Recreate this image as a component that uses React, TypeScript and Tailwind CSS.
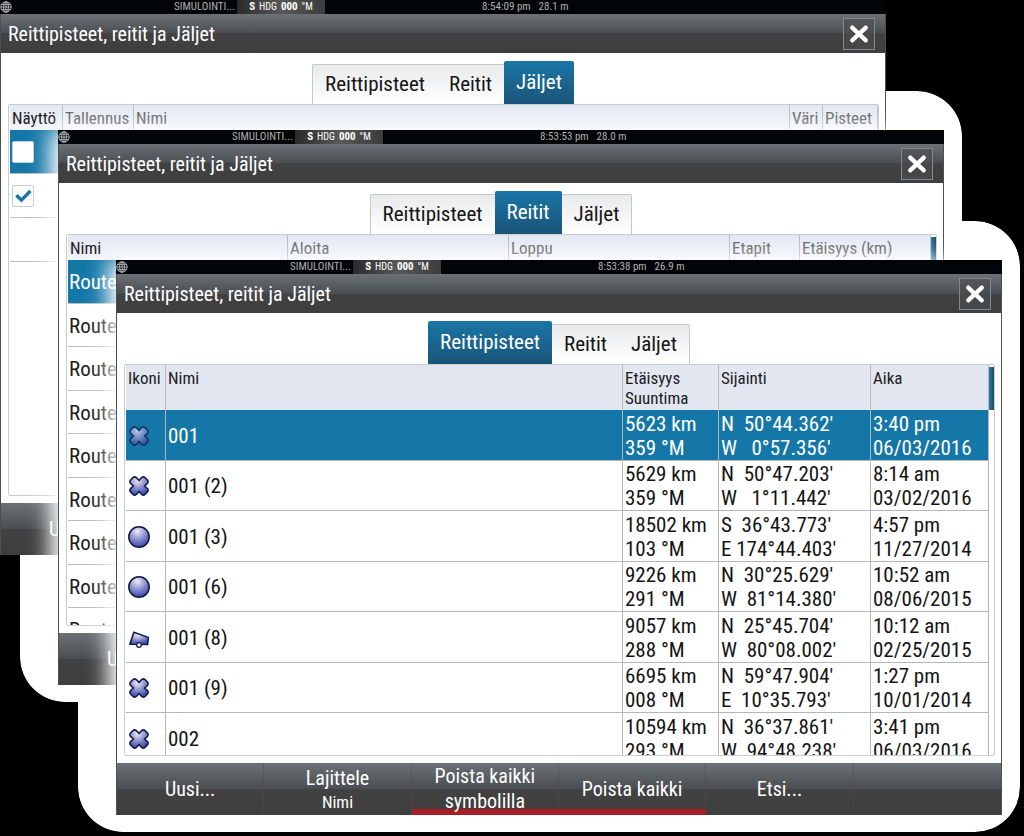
import type { ReactNode } from 'react';

type TabName = 'Reittipisteet' | 'Reitit' | 'Jäljet';
type Symbol = 'cross' | 'circle' | 'trailer';

type Waypoint = {
  symbol: Symbol;
  name: string;
  range: string;
  bearing: string;
  lat: string;
  lon: string;
  time: string;
  date: string;
};

type Action = { lines: string[]; value?: string; danger?: boolean };

const tabNames: TabName[] = ['Reittipisteet', 'Reitit', 'Jäljet'];

const waypoints: Waypoint[] = [
  { symbol: 'cross', name: '001', range: '5623 km', bearing: '359 °M', lat: "N  50°44.362'", lon: "W   0°57.356'", time: '3:40 pm', date: '06/03/2016' },
  { symbol: 'cross', name: '001 (2)', range: '5629 km', bearing: '359 °M', lat: "N  50°47.203'", lon: "W   1°11.442'", time: '8:14 am', date: '03/02/2016' },
  { symbol: 'circle', name: '001 (3)', range: '18502 km', bearing: '103 °M', lat: "S  36°43.773'", lon: "E 174°44.403'", time: '4:57 pm', date: '11/27/2014' },
  { symbol: 'circle', name: '001 (6)', range: '9226 km', bearing: '291 °M', lat: "N  30°25.629'", lon: "W  81°14.380'", time: '10:52 am', date: '08/06/2015' },
  { symbol: 'trailer', name: '001 (8)', range: '9057 km', bearing: '288 °M', lat: "N  25°45.704'", lon: "W  80°08.002'", time: '10:12 am', date: '02/25/2015' },
  { symbol: 'cross', name: '001 (9)', range: '6695 km', bearing: '008 °M', lat: "N  59°47.904'", lon: "E  10°35.793'", time: '1:27 pm', date: '10/01/2014' },
  { symbol: 'cross', name: '002', range: '10594 km', bearing: '293 °M', lat: "N  36°37.861'", lon: "W  94°48.238'", time: '3:41 pm', date: '06/03/2016' },
];

const routes = Array.from({ length: 9 }, () => 'Route');

const createOnly: Action[] = [{ lines: ['Uusi...'] }];

const waypointActions: Action[] = [
  { lines: ['Uusi...'] },
  { lines: ['Lajittele'], value: 'Nimi' },
  { lines: ['Poista kaikki', 'symbolilla'], danger: true },
  { lines: ['Poista kaikki'], danger: true },
  { lines: ['Etsi...'] },
];

function Globe() {
  return (
    <svg viewBox="0 0 12 12" className="size-3" fill="none" stroke="#b9bcbe" strokeWidth="0.9" aria-hidden="true">
      <circle cx="6" cy="6" r="5.2" />
      <ellipse cx="6" cy="6" rx="2.4" ry="5.2" />
      <path d="M6 .8v10.4M.8 6h10.4M1.6 3.4h8.8M1.6 8.6h8.8" />
    </svg>
  );
}

function SymbolIcon({ symbol, dimmed }: { symbol: Symbol; dimmed: boolean }) {
  const id = `fill-${symbol}`;
  return (
    <svg viewBox="0 0 24 24" className={dimmed ? 'size-6 opacity-75' : 'size-6'} aria-label={symbol} role="img">
      <defs>
        <radialGradient id={id} cx="0.42" cy="0.22" r="0.75">
          <stop offset="0" stopColor="#eeeafa" />
          <stop offset="0.5" stopColor="#9397d2" />
          <stop offset="1" stopColor="#3c4cab" />
        </radialGradient>
      </defs>
      {symbol === 'cross' && (
        <path
          d="M12 6.6 L14.2 4 Q16.2 1.8 18.2 3.8 L20.2 5.8 Q22.2 7.8 20 9.8 L17.4 12 L20 14.2 Q22.2 16.2 20.2 18.2 L18.2 20.2 Q16.2 22.2 14.2 20 L12 17.4 L9.8 20 Q7.8 22.2 5.8 20.2 L3.8 18.2 Q1.8 16.2 4 14.2 L6.6 12 L4 9.8 Q1.8 7.8 3.8 5.8 L5.8 3.8 Q7.8 1.8 9.8 4 Z"
          fill={`url(#${id})`}
          stroke="#151b45"
          strokeWidth="1.6"
          strokeLinejoin="round"
        />
      )}
      {symbol === 'circle' && <circle cx="12" cy="12" r="10.2" fill={`url(#${id})`} stroke="#10153a" strokeWidth="1.5" />}
      {symbol === 'trailer' && (
        <>
          <path d="M6.8 6.2 L21.4 11.4 L20.6 18.6 L2.8 18.2 Z" fill={`url(#${id})`} stroke="#151b45" strokeWidth="1.5" strokeLinejoin="round" />
          <circle cx="12" cy="19" r="2.3" fill="#ffffff" stroke="#151b45" strokeWidth="1.3" />
        </>
      )}
    </svg>
  );
}

function StatusBar({ time, depth }: { time: string; depth: string }) {
  return (
    <div className="grid h-[14px] grid-cols-[237fr_88fr_561fr] overflow-hidden bg-[#020507] text-[11px] leading-[14px] text-[#b0b0b0]">
      <div className="flex items-center justify-between pr-0.5">
        <Globe />
        <span>SIMULOINTI...</span>
      </div>
      <div className="flex items-center justify-center gap-1 bg-linear-to-r from-[#2b2b2b] via-[#585858] to-[#3c3c3c] text-white">
        <b>S</b>
        <span className="text-[10px]">HDG</span>
        <b>000</b>
        <span className="text-[10px]">°M</span>
      </div>
      <div className="flex gap-2 pl-[28%]">
        <span>{time}</span>
        <span>{depth}</span>
      </div>
    </div>
  );
}

function TitleBar() {
  return (
    <header className="flex h-[39px] items-center justify-between bg-[linear-gradient(#6b7176,#4a4e52_50%,#424242_50%,#3e3e3e)] pr-2.5 pl-[7px] text-white">
      <h2 className="text-[20px] leading-6">Reittipisteet, reitit ja Jäljet</h2>
      <button type="button" aria-label="Sulje" className="grid size-8 place-items-center border border-[#85888a] bg-[#4b4d4f]/60">
        <svg viewBox="0 0 20 20" className="size-5" stroke="#ffffff" strokeWidth="4.2" strokeLinecap="round" aria-hidden="true">
          <path d="M3.2 3.6 16.8 16.4M16.8 3.6 3.2 16.4" />
        </svg>
      </button>
    </header>
  );
}

function Tabs({ active }: { active: TabName }) {
  return (
    <div role="tablist" className="flex h-[51px] items-end justify-center text-[21px]">
      {tabNames.map((name) => (
        <button
          key={name}
          type="button"
          role="tab"
          aria-selected={name === active}
          className={
            name === active
              ? 'h-[43px] rounded-t-xs bg-linear-to-b from-[#1976a7] to-[#1a5478] px-3 text-white'
              : 'h-10 border-t border-[#c6c8ca] bg-linear-to-b from-[#e9eaec] to-white px-3 text-[#161616] first:rounded-tl-xs first:border-l last:rounded-tr-xs last:border-r'
          }
        >
          {name}
        </button>
      ))}
    </div>
  );
}

function Panel({ thumb, children }: { thumb?: boolean; children: ReactNode }) {
  return (
    <div className="mr-[6px] mb-[7px] ml-[7px] flex h-[392px] items-start overflow-hidden rounded-xs border border-[#c9cdd1] bg-white pl-px">
      <div className="min-w-0 flex-1">{children}</div>
      {thumb && (
        <div className="w-[5px] pt-0.5">
          <div className="h-[43px] bg-linear-to-r from-[#2d7fa8] to-[#1b4963]" />
        </div>
      )}
    </div>
  );
}

function Footer({ actions }: { actions: Action[] }) {
  return (
    <footer className="grid h-[52px] grid-cols-6 bg-[linear-gradient(#6b7176,#4a4e52_50%,#424242_50%,#3e3e3e)] text-[20px] leading-[25px] text-white">
      {actions.map(({ lines, value, danger }) => (
        <button
          key={lines.join(' ')}
          type="button"
          className={`relative flex flex-col items-center justify-center border-r border-[#6b4046]/50 ${
            danger ? 'before:absolute before:-right-px before:bottom-0 before:left-0 before:h-1.5 before:bg-[#a81d27]' : ''
          }`}
        >
          {lines.map((line) => (
            <span key={line} className="relative">{line}</span>
          ))}
          {value && <span className="text-[17px] leading-[22px]">{value}</span>}
        </button>
      ))}
    </footer>
  );
}

type FrameProps = {
  active: TabName;
  time: string;
  depth: string;
  thumb?: boolean;
  actions: Action[];
  className: string;
  children: ReactNode;
};

function Frame({ active, time, depth, thumb, actions, className, children }: FrameProps) {
  return (
    <section aria-label={active} className={`relative bg-white ${className}`}>
      <StatusBar time={time} depth={depth} />
      <div className="border-x border-[#4d4f51]">
        <TitleBar />
        <Tabs active={active} />
        <Panel thumb={thumb}>{children}</Panel>
        <Footer actions={actions} />
      </div>
    </section>
  );
}

/* White rounded backing that also clips the soft glow around a window. */
function Halo({ className, children }: { className: string; children: ReactNode }) {
  return (
    <div className={`relative col-start-1 row-start-1 self-start overflow-hidden rounded-[45px] pt-[39px] pr-[18px] pb-[17px] pl-[38px] ${className}`}>
      <div className="absolute inset-0 z-0 rounded-[45px] bg-white" />
      {children}
    </div>
  );
}

const smallHead = 'h-[25px] border-r border-[#b9bdc4] px-[2px] text-left font-normal whitespace-nowrap';

function TracksTable() {
  return (
    <table className="w-full table-fixed border-separate border-spacing-0 text-[17px] leading-6">
      <colgroup>
        <col className="w-[53px]" />
        <col className="w-[71px]" />
        <col />
        <col className="w-[33px]" />
        <col className="w-[55px]" />
      </colgroup>
      <thead className="bg-linear-to-b from-[#e2e7f2] to-[#f2f5fa] text-[#666666]">
        <tr>
          <th className={`${smallHead} text-[#1c1c1c]`}>Näyttö</th>
          <th className={smallHead}>Tallennus</th>
          <th className={smallHead}>Nimi</th>
          <th className={smallHead}>Väri</th>
          <th className={smallHead}>Pisteet</th>
        </tr>
      </thead>
      <tbody>
        {[false, true, null].map((shown, i) => (
          <tr key={i} className={i === 0 ? 'h-11 bg-[#1577a8]' : 'h-11'}>
            <td colSpan={5} className="border-b border-[#b9bdc1] pl-[2px]">
              {shown !== null && (
                <label className="grid w-[22px]">
                  <input
                    type="checkbox"
                    aria-label="Näyttö"
                    defaultChecked={shown}
                    className="peer col-start-1 row-start-1 size-[22px] appearance-none rounded-xs border border-[#c4cdd4] bg-white"
                  />
                  <svg viewBox="0 0 22 22" className="pointer-events-none invisible col-start-1 row-start-1 size-[22px] peer-checked:visible" fill="none" stroke="#1877a6" strokeWidth="3.4" aria-hidden="true">
                    <path d="M4.4 10.2 9.4 15.2 18.4 6" />
                  </svg>
                </label>
              )}
            </td>
          </tr>
        ))}
      </tbody>
    </table>
  );
}

function RoutesTable() {
  return (
    <table className="w-full table-fixed border-separate border-spacing-0 text-[17px] leading-6">
      <colgroup>
        <col className="w-[220px]" />
        <col />
        <col className="w-[221px]" />
        <col className="w-[70px]" />
        <col className="w-[131px]" />
      </colgroup>
      <thead className="bg-linear-to-b from-[#e2e7f2] to-[#f2f5fa] text-[#666666]">
        <tr>
          <th className={`${smallHead} text-[#1c1c1c]`}>Nimi</th>
          <th className={smallHead}>Aloita</th>
          <th className={smallHead}>Loppu</th>
          <th className={smallHead}>Etapit</th>
          <th className={smallHead}>Etäisyys (km)</th>
        </tr>
      </thead>
      <tbody className="text-[21px] text-[#1a1a1a]">
        {routes.map((name, i) => (
          <tr key={i} className={i === 0 ? 'h-11 bg-[#1577a8] text-white' : 'odd:h-11 even:h-[43px]'}>
            <td colSpan={5} className="border-b border-[#b9bdc1] pt-px pl-px">{name}</td>
          </tr>
        ))}
      </tbody>
    </table>
  );
}

function WaypointsTable() {
  const head = 'h-[45px] border-r border-[#b4b8bf] px-[2px] pt-[3px] text-left align-top font-normal';
  const cell = 'border-r border-b border-[#b4b6b9] pt-px pl-[2px] whitespace-pre';
  return (
    <table className="w-full table-fixed border-separate border-spacing-0 text-[17px] leading-5">
      <colgroup>
        <col className="w-10" />
        <col />
        <col className="w-24" />
        <col className="w-[152px]" />
        <col className="w-[118px]" />
      </colgroup>
      <thead className="bg-[#e1e6f1] text-[#1c1c1c]">
        <tr>
          <th className={head}>Ikoni</th>
          <th className={head}>Nimi</th>
          <th className={head}>Etäisyys<br />Suuntima</th>
          <th className={head}>Sijainti</th>
          <th className={head}>Aika</th>
        </tr>
      </thead>
      <tbody className="text-[21px] leading-6 text-[#141414]">
        {waypoints.map((w, i) => (
          <tr key={w.name} className={i === 0 ? 'h-[51px] bg-[#1577a8] text-white' : 'odd:h-[51px] even:h-[50px]'}>
            <td className="border-r border-b border-[#b4b6b9] pt-px pl-px"><SymbolIcon symbol={w.symbol} dimmed={i === 0} /></td>
            <td className={cell}>{w.name}</td>
            <td className={cell}>{w.range}<br />{w.bearing}</td>
            <td className={cell}>{w.lat}<br />{w.lon}</td>
            <td className={cell}>{w.time}<br />{w.date}</td>
          </tr>
        ))}
      </tbody>
    </table>
  );
}

export default function App() {
  return (
    <main className="grid min-h-screen grid-cols-1 bg-black pb-1 font-['Roboto_Condensed','Roboto','Noto_Sans',sans-serif]">
      <Frame active="Jäljet" time="8:54:09 pm" depth="28.1 m" actions={createOnly} className="z-10 col-start-1 row-start-1 mr-[138px] self-start">
        <TracksTable />
      </Frame>
      <Halo className="mt-[91px] mr-[62px] ml-5">
        <Frame active="Reitit" time="8:53:53 pm" depth="28.0 m" thumb actions={createOnly} className="z-20 shadow-[-2px_6px_20px_6px_#ffffff]">
          <RoutesTable />
        </Frame>
      </Halo>
      <Halo className="mt-[221px] mr-1 ml-[78px]">
        <Frame active="Reittipisteet" time="8:53:38 pm" depth="26.9 m" thumb actions={waypointActions} className="z-30 shadow-[-2px_6px_20px_6px_#ffffff]">
          <WaypointsTable />
        </Frame>
      </Halo>
    </main>
  );
}
